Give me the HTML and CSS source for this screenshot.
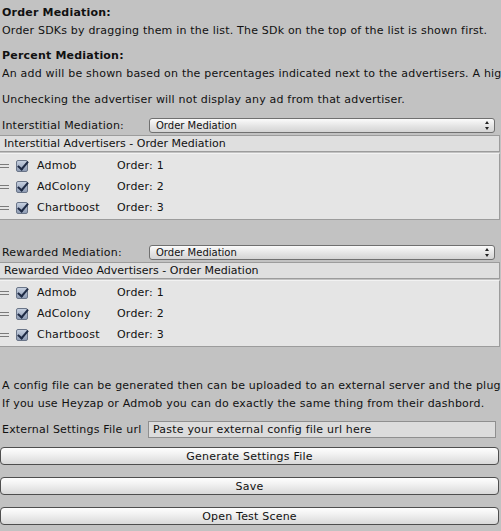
FILE: index.html
```html
<!DOCTYPE html>
<html lang="en">
<head>
    <meta charset="utf-8">
    <title>Mediation Settings</title>
    <link rel="stylesheet" href="styles.css">
</head>
<body>
    <div class="inspector">
        <div class="help">
            <h4>Order Mediation:</h4>
            <p>Order SDKs by dragging them in the list. The SDk on the top of the list is shown first.</p>
        </div>
        <div class="help">
            <h4>Percent Mediation:</h4>
            <p>An add will be shown based on the percentages indicated next to the advertisers. A higher percentage means more chances to show.</p>
        </div>
        <p class="note">Unchecking the advertiser will not display any ad from that advertiser.</p>

        <div class="field">
            <label>Interstitial Mediation:</label>
            <div class="popup">Order Mediation<span class="arrows"></span></div>
        </div>
        <div class="list">
            <div class="list-header">Interstitial Advertisers - Order Mediation</div>
            <div class="list-body">
                <div class="list-row"><span class="handle"></span><span class="check"></span><span class="name">Admob</span><span>Order: 1</span></div>
                <div class="list-row"><span class="handle"></span><span class="check"></span><span class="name">AdColony</span><span>Order: 2</span></div>
                <div class="list-row"><span class="handle"></span><span class="check"></span><span class="name">Chartboost</span><span>Order: 3</span></div>
            </div>
        </div>

        <div class="field">
            <label>Rewarded Mediation:</label>
            <div class="popup">Order Mediation<span class="arrows"></span></div>
        </div>
        <div class="list">
            <div class="list-header">Rewarded Video Advertisers - Order Mediation</div>
            <div class="list-body">
                <div class="list-row"><span class="handle"></span><span class="check"></span><span class="name">Admob</span><span>Order: 1</span></div>
                <div class="list-row"><span class="handle"></span><span class="check"></span><span class="name">AdColony</span><span>Order: 2</span></div>
                <div class="list-row"><span class="handle"></span><span class="check"></span><span class="name">Chartboost</span><span>Order: 3</span></div>
            </div>
        </div>

        <div class="config">
            <p>A config file can be generated then can be uploaded to an external server and the plugin will read the settings from there.</p>
            <p>If you use Heyzap or Admob you can do exactly the same thing from their dashbord.</p>
        </div>

        <div class="field url-field">
            <label>External Settings File url</label>
            <input class="text-input" type="text" value="Paste your external config file url here">
        </div>

        <button class="btn">Generate Settings File</button>
        <button class="btn">Save</button>
        <button class="btn">Open Test Scene</button>
    </div>
</body>
</html>
```

FILE: styles.css
```css
* {
    margin: 0;
    padding: 0;
    box-sizing: border-box;
}

body {
    font-family: "DejaVu Sans", Verdana, sans-serif;
    font-size: 11px;
    letter-spacing: 0.2px;
    color: #111;
    background: #c2c2c2;
    overflow: hidden;
}

.inspector {
    width: 501px;
    height: 531px;
    padding-left: 2px;
    border-bottom: 4px solid #a4a4a4;
}

p, h4 {
    white-space: nowrap;
    overflow: hidden;
    line-height: 18px;
}

h4 {
    font-weight: bold;
    margin-top: 4px;
}

.help {
    margin-bottom: 7px;
}

.help + .help {
    margin-bottom: 8px;
}

.help + .help h4 {
    margin-top: 0;
}

.note {
    margin-bottom: 8px;
}

.field {
    display: flex;
    align-items: center;
    height: 17px;
}

.field label {
    width: 147px;
    flex-shrink: 0;
}

.popup {
    position: relative;
    width: 346px;
    height: 15px;
    border: 1px solid #707070;
    border-radius: 3px;
    background: linear-gradient(#fbfbfb, #e2e2e2 60%, #d4d4d4);
    font-size: 10px;
    line-height: 13px;
    padding-left: 6px;
    letter-spacing: 0;
}

.arrows {
    position: absolute;
    right: 4px;
    top: 2px;
    width: 5px;
    height: 9px;
}

.arrows:before,
.arrows:after {
    content: "";
    position: absolute;
    left: 0;
    border-left: 2.5px solid transparent;
    border-right: 2.5px solid transparent;
}

.arrows:before {
    top: 0;
    border-bottom: 3px solid #222;
}

.arrows:after {
    bottom: 0;
    border-top: 3px solid #222;
}

.list {
    margin-left: -2px;
    width: 500px;
    margin-top: 1px;
    margin-bottom: 24px;
}

.list-header {
    height: 17px;
    background: #dfdfdf;
    border: 1px solid #9c9c9c;
    border-left: none;
    line-height: 15px;
    padding-left: 4px;
    letter-spacing: 0;
}

.list-body {
    margin-top: 1px;
    height: 67px;
    background: #e5e5e5;
    border: 1px solid #9c9c9c;
    border-left: none;
    border-top-color: #f2f2f2;
    padding-top: 1px;
}

.list-row {
    display: flex;
    align-items: center;
    height: 21px;
}

.handle {
    width: 9px;
    height: 4px;
    border-top: 1px solid #7a7a7a;
    border-bottom: 1px solid #7a7a7a;
    margin-right: 7px;
}

.check {
    position: relative;
    width: 12px;
    height: 12px;
    border: 1px solid #6a7588;
    border-radius: 2px;
    background: linear-gradient(#c5cfdf, #8f9cb4);
    margin-right: 9px;
}

.check:after {
    content: "";
    position: absolute;
    left: 3px;
    top: -2px;
    width: 4px;
    height: 9px;
    border-right: 2.5px solid #1e2a44;
    border-bottom: 2.5px solid #1e2a44;
    transform: rotate(40deg);
}

.name {
    width: 80px;
}

.config {
    margin-top: 30px;
    margin-bottom: 8px;
}

.url-field {
    height: 17px;
    margin-bottom: 9px;
}

.text-input {
    width: 348px;
    height: 17px;
    margin-left: -1px;
    border: 1px solid #8f8f8f;
    background: #dcdcdc;
    font-family: inherit;
    font-size: 11px;
    letter-spacing: 0.2px;
    color: #111;
    padding-left: 4px;
    outline: none;
}

.btn {
    display: block;
    width: 499px;
    margin-left: -2px;
    height: 18px;
    margin-bottom: 12px;
    border: 1px solid #4e4e4e;
    border-radius: 4px;
    background: linear-gradient(#fefefe, #f1f1f1 40%, #d9d9d9);
    font-family: inherit;
    font-size: 11px;
    letter-spacing: 0.2px;
    color: #111;
    text-align: center;
}

.btn + .btn {
    margin-top: 1px;
}
```
